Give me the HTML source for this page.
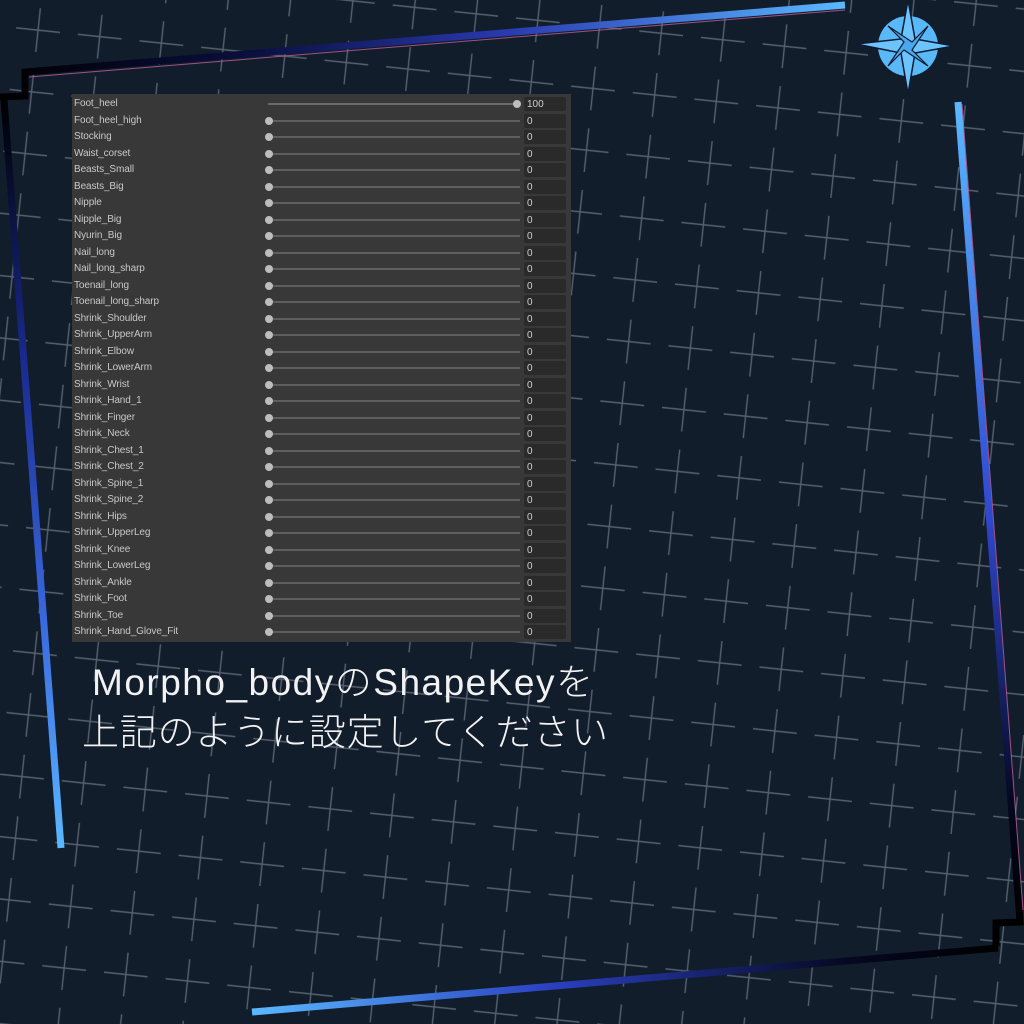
<!DOCTYPE html>
<html><head><meta charset="utf-8"><style>
html,body{margin:0;padding:0;width:1024px;height:1024px;overflow:hidden;background:#121d2c}
#bg{position:absolute;left:0;top:0}
.panel{position:absolute;left:72px;top:94px;width:499px;height:548px;background:#383838}
.row{position:absolute;left:0;width:499px;height:16px}
.row .l{position:absolute;left:2px;top:3px;font:10px "Liberation Sans",sans-serif;color:#c8c8c8;letter-spacing:-0.1px}
.row .t{position:absolute;left:196px;top:8px;width:252px;height:2px;background:#5e5e5e}
.row .k{position:absolute;left:193px;top:5px;width:8px;height:8px;border-radius:50%;background:#bdbdbd}
.row .f{position:absolute;left:452px;top:2px;width:42px;height:14px;background:#2a2a2a;border-radius:2px}
.row .f span{position:absolute;left:3px;top:2px;font:10px "Liberation Sans",sans-serif;color:#d0d0d0}
.txt{position:absolute;font-family:"Liberation Sans","Noto Sans CJK JP",sans-serif;font-weight:300;color:#f2f2f2;font-size:37px;white-space:nowrap}
</style></head><body>
<svg id="bg" width="1024" height="1024" viewBox="0 0 1024 1024">
<defs>
<pattern id="p" width="62" height="62" patternUnits="userSpaceOnUse" patternTransform="rotate(6) translate(10,-5)">
<path d="M9 31H53M31 9V53" stroke="#56606e" stroke-width="1.4" fill="none"/>
</pattern>
<linearGradient id="gt" x1="0" y1="0" x2="1" y2="0"><stop offset="0" stop-color="#000"/><stop offset="0.3" stop-color="#0a0f40"/><stop offset="0.6" stop-color="#2a3ab0"/><stop offset="1" stop-color="#5ab8ff"/></linearGradient>
<linearGradient id="gl" gradientUnits="userSpaceOnUse" x1="5" y1="100" x2="62" y2="848"><stop offset="0" stop-color="#000"/><stop offset="0.35" stop-color="#1a2a90"/><stop offset="0.7" stop-color="#3a6ae0"/><stop offset="1" stop-color="#5ab8ff"/></linearGradient>
<linearGradient id="gr" gradientUnits="userSpaceOnUse" x1="958" y1="102" x2="1020" y2="925"><stop offset="0" stop-color="#5ab8ff"/><stop offset="0.5" stop-color="#3048d0"/><stop offset="0.85" stop-color="#050820"/><stop offset="1" stop-color="#000"/></linearGradient>
<linearGradient id="gb" gradientUnits="userSpaceOnUse" x1="252" y1="1012" x2="1000" y2="948"><stop offset="0" stop-color="#5ab8ff"/><stop offset="0.4" stop-color="#2a40c0"/><stop offset="0.8" stop-color="#050820"/><stop offset="1" stop-color="#000"/></linearGradient>
</defs>
<rect width="1024" height="1024" fill="#121d2c"/>
<rect width="1024" height="1024" fill="url(#p)"/>
<path d="M0 97 L25 96 L25 72 L845 5" stroke="url(#gt)" stroke-width="7" fill="none"/>
<path d="M29 77 L845 10" stroke="#c0609a" stroke-width="1" fill="none" opacity="0.8"/>
<path d="M4 100 L61 848" stroke="url(#gl)" stroke-width="7" fill="none"/>
<path d="M958 102 L1020 922 L996 923 L996 946" stroke="url(#gr)" stroke-width="7" fill="none"/>
<path d="M962 104 L1023 910" stroke="#c0609a" stroke-width="1" fill="none" opacity="0.8"/>
<path d="M252 1012 L998 948" stroke="url(#gb)" stroke-width="7" fill="none"/>
<g transform="translate(908,46)">
<circle r="30" fill="#58b8f8"/>
<path d="M0 -46 L7 -7 L46 0 L7 7 L0 48 L-7 7 L-52 -2 L-7 -7 Z" fill="#6cc4ff" stroke="#0e1a30" stroke-width="1.5"/>
<path d="M-20 -20 L4 -4 L20 -20 L4 4 L20 20 L-4 4 L-20 20 L-4 -4 Z" fill="#4aa8ee" stroke="#0e1a30" stroke-width="1.2"/>
</g>
</svg>
<div class="panel">
<div class="row" style="top:1px"><div class="l">Foot_heel</div><div class="t" style="background:#6a6a6a"></div><div class="k" style="left:441px"></div><div class="f"><span>100</span></div></div>
<div class="row" style="top:17.5px"><div class="l">Foot_heel_high</div><div class="t"></div><div class="k"></div><div class="f"><span>0</span></div></div>
<div class="row" style="top:34px"><div class="l">Stocking</div><div class="t"></div><div class="k"></div><div class="f"><span>0</span></div></div>
<div class="row" style="top:50.5px"><div class="l">Waist_corset</div><div class="t"></div><div class="k"></div><div class="f"><span>0</span></div></div>
<div class="row" style="top:67px"><div class="l">Beasts_Small</div><div class="t"></div><div class="k"></div><div class="f"><span>0</span></div></div>
<div class="row" style="top:83.5px"><div class="l">Beasts_Big</div><div class="t"></div><div class="k"></div><div class="f"><span>0</span></div></div>
<div class="row" style="top:100px"><div class="l">Nipple</div><div class="t"></div><div class="k"></div><div class="f"><span>0</span></div></div>
<div class="row" style="top:116.5px"><div class="l">Nipple_Big</div><div class="t"></div><div class="k"></div><div class="f"><span>0</span></div></div>
<div class="row" style="top:133px"><div class="l">Nyurin_Big</div><div class="t"></div><div class="k"></div><div class="f"><span>0</span></div></div>
<div class="row" style="top:149.5px"><div class="l">Nail_long</div><div class="t"></div><div class="k"></div><div class="f"><span>0</span></div></div>
<div class="row" style="top:166px"><div class="l">Nail_long_sharp</div><div class="t"></div><div class="k"></div><div class="f"><span>0</span></div></div>
<div class="row" style="top:182.5px"><div class="l">Toenail_long</div><div class="t"></div><div class="k"></div><div class="f"><span>0</span></div></div>
<div class="row" style="top:199px"><div class="l">Toenail_long_sharp</div><div class="t"></div><div class="k"></div><div class="f"><span>0</span></div></div>
<div class="row" style="top:215.5px"><div class="l">Shrink_Shoulder</div><div class="t"></div><div class="k"></div><div class="f"><span>0</span></div></div>
<div class="row" style="top:232px"><div class="l">Shrink_UpperArm</div><div class="t"></div><div class="k"></div><div class="f"><span>0</span></div></div>
<div class="row" style="top:248.5px"><div class="l">Shrink_Elbow</div><div class="t"></div><div class="k"></div><div class="f"><span>0</span></div></div>
<div class="row" style="top:265px"><div class="l">Shrink_LowerArm</div><div class="t"></div><div class="k"></div><div class="f"><span>0</span></div></div>
<div class="row" style="top:281.5px"><div class="l">Shrink_Wrist</div><div class="t"></div><div class="k"></div><div class="f"><span>0</span></div></div>
<div class="row" style="top:298px"><div class="l">Shrink_Hand_1</div><div class="t"></div><div class="k"></div><div class="f"><span>0</span></div></div>
<div class="row" style="top:314.5px"><div class="l">Shrink_Finger</div><div class="t"></div><div class="k"></div><div class="f"><span>0</span></div></div>
<div class="row" style="top:331px"><div class="l">Shrink_Neck</div><div class="t"></div><div class="k"></div><div class="f"><span>0</span></div></div>
<div class="row" style="top:347.5px"><div class="l">Shrink_Chest_1</div><div class="t"></div><div class="k"></div><div class="f"><span>0</span></div></div>
<div class="row" style="top:364px"><div class="l">Shrink_Chest_2</div><div class="t"></div><div class="k"></div><div class="f"><span>0</span></div></div>
<div class="row" style="top:380.5px"><div class="l">Shrink_Spine_1</div><div class="t"></div><div class="k"></div><div class="f"><span>0</span></div></div>
<div class="row" style="top:397px"><div class="l">Shrink_Spine_2</div><div class="t"></div><div class="k"></div><div class="f"><span>0</span></div></div>
<div class="row" style="top:413.5px"><div class="l">Shrink_Hips</div><div class="t"></div><div class="k"></div><div class="f"><span>0</span></div></div>
<div class="row" style="top:430px"><div class="l">Shrink_UpperLeg</div><div class="t"></div><div class="k"></div><div class="f"><span>0</span></div></div>
<div class="row" style="top:446.5px"><div class="l">Shrink_Knee</div><div class="t"></div><div class="k"></div><div class="f"><span>0</span></div></div>
<div class="row" style="top:463px"><div class="l">Shrink_LowerLeg</div><div class="t"></div><div class="k"></div><div class="f"><span>0</span></div></div>
<div class="row" style="top:479.5px"><div class="l">Shrink_Ankle</div><div class="t"></div><div class="k"></div><div class="f"><span>0</span></div></div>
<div class="row" style="top:496px"><div class="l">Shrink_Foot</div><div class="t"></div><div class="k"></div><div class="f"><span>0</span></div></div>
<div class="row" style="top:512.5px"><div class="l">Shrink_Toe</div><div class="t"></div><div class="k"></div><div class="f"><span>0</span></div></div>
<div class="row" style="top:529px"><div class="l">Shrink_Hand_Glove_Fit</div><div class="t"></div><div class="k"></div><div class="f"><span>0</span></div></div>
</div>
<div class="txt" style="left:92px;top:652px;letter-spacing:1.5px">Morpho_bodyのShapeKeyを</div>
<div class="txt" style="left:82px;top:702px;letter-spacing:0.8px">上記のように設定してください</div>
</body></html>
